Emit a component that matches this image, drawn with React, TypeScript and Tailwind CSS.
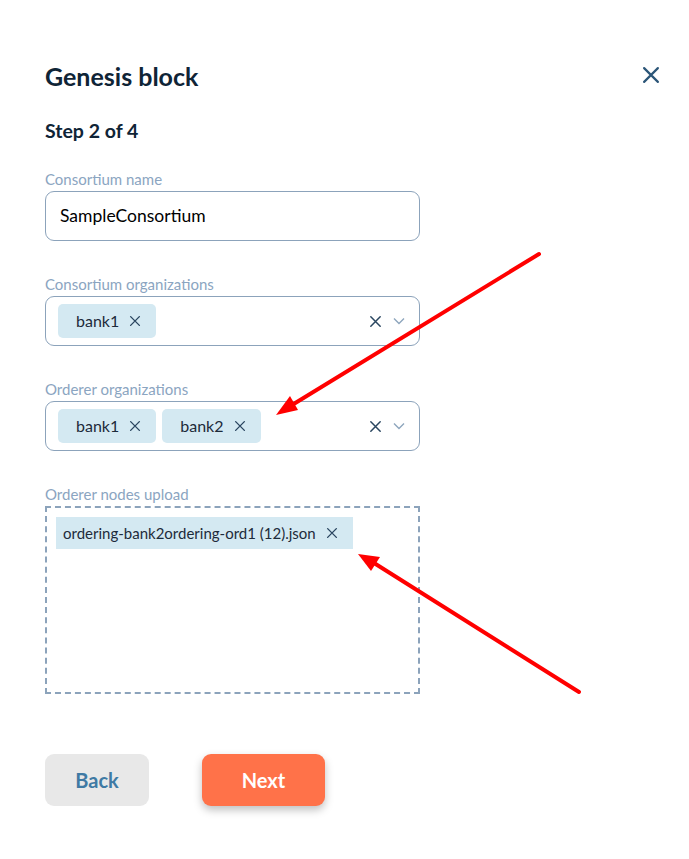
import React from "react";

const Cross = ({ className = "" }: { className?: string }) => (
  <svg viewBox="0 0 16 16" className={className} fill="none" stroke="currentColor" strokeWidth={1.6} strokeLinecap="round">
    <path d="M3 3l10 10M13 3L3 13" />
  </svg>
);

const Chevron = () => (
  <svg viewBox="0 0 12 8" className="h-[8px] w-[12px] text-[#8ea6bd]" fill="none" stroke="currentColor" strokeWidth={1.4}>
    <path d="M1 1.5l5 5 5-5" />
  </svg>
);

function Chip({ label }: { label: string }) {
  return (
    <span className="flex h-[34px] items-center gap-[9px] rounded-[5px] bg-[#d4e9f2] pl-[18px] pr-[14px] text-[16px] text-[#1d2b3a]">
      {label}
      <Cross className="h-[14px] w-[14px] text-[#2a4660]" />
    </span>
  );
}

function MultiSelect({ label, values }: { label: string; values: string[] }) {
  return (
    <div className="mt-[33px]">
      <div className="h-[20px] text-[15px] leading-[20px] text-[#8ba5c1]">{label}</div>
      <div className="mt-[2px] flex h-[50px] w-[375px] items-center rounded-[9px] border border-[#8ca3bb] pl-[12px] pr-[14px]">
        <div className="flex flex-1 gap-[6px]">
          {values.map((v) => (
            <Chip key={v} label={v} />
          ))}
        </div>
        <Cross className="h-[15px] w-[15px] text-[#2a4660]" />
        <span className="ml-[10px]">
          <Chevron />
        </span>
      </div>
    </div>
  );
}

export default function App() {
  return (
    <div className="relative h-[859px] w-[689px] bg-white pl-[45px] pt-[60px] font-['Lato',sans-serif]">
      <button className="absolute left-[640px] top-[64px] text-[#2c5678]">
        <Cross className="h-[22px] w-[22px]" />
      </button>

      <h1 className="text-[25px] font-bold leading-[32px] text-[#0f2436]">Genesis block</h1>
      <h2 className="mt-[27px] text-[19.5px] font-bold leading-[24px] text-[#0f2436]">Step 2 of 4</h2>

      <div className="mt-[26px]">
        <div className="h-[20px] text-[15px] leading-[20px] text-[#8ba5c1]">Consortium name</div>
        <div className="mt-[2px] flex h-[50px] w-[375px] items-center rounded-[9px] border border-[#8ca3bb] px-[14px] text-[17.5px] text-black">
          SampleConsortium
        </div>
      </div>

      <MultiSelect label="Consortium organizations" values={["bank1"]} />
      <MultiSelect label="Orderer organizations" values={["bank1", "bank2"]} />

      <div className="mt-[33px]">
        <div className="h-[20px] text-[15px] leading-[20px] text-[#8ba5c1]">Orderer nodes upload</div>
        <div className="mt-[2px] h-[188px] w-[375px] border-2 border-dashed border-[#8ca3bb] pl-[9px] pt-[9px]">
          <span className="inline-flex h-[32px] items-center gap-[9px] bg-[#d4e9f2] pl-[7px] pr-[14px] text-[15px] text-[#1d2b3a]">
            ordering-bank2ordering-ord1 (12).json
            <Cross className="h-[14px] w-[14px] text-[#2a4660]" />
          </span>
        </div>
      </div>

      <div className="mt-[60px] flex gap-[53px]">
        <button className="h-[52px] w-[104px] rounded-[9px] bg-[#e8e8e8] text-[20px] font-bold text-[#3f7aa4]">Back</button>
        <button className="h-[52px] w-[123px] rounded-[9px] bg-[#ff7249] text-[20px] font-bold text-white shadow-[0_4px_8px_rgba(0,0,0,0.25)]">
          Next
        </button>
      </div>

      <svg className="pointer-events-none absolute left-0 top-0" width="689" height="859">
        <g stroke="#ff0000" strokeWidth="4" strokeLinecap="round" fill="#ff0000">
          <line x1="539" y1="254" x2="292" y2="405" />
          <polygon points="276,415 290,396 298,410" stroke="none" />
          <line x1="579" y1="692" x2="374" y2="563" />
          <polygon points="358,554 380,557 371,571" stroke="none" />
        </g>
      </svg>
    </div>
  );
}
